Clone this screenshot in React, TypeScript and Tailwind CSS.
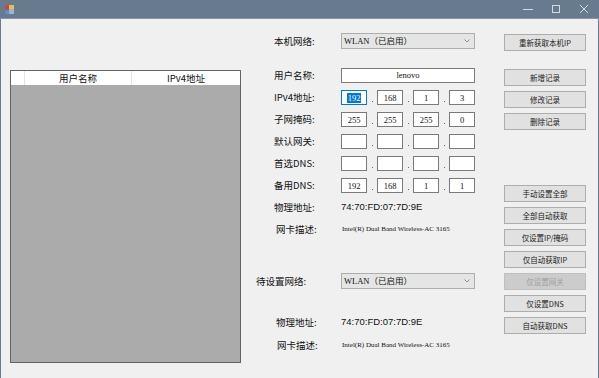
import React from "react";

const cjk = "font-['Microsoft_YaHei','Noto_Sans_CJK_SC',sans-serif]";
const serif = "font-['Liberation_Serif','Noto_Sans_CJK_SC',serif]";

function Label({ text, pl = "pl-[18px]" }: { text: string; pl?: string }) {
  return (
    <div className={`w-[85px] shrink-0 ${pl} text-[9.5px] text-[#111] ${cjk}`}>{text}</div>
  );
}

function Combo({ value }: { value: string }) {
  return (
    <div className="w-[134px] h-[16px] bg-[#e5e5e5] border border-[#adadad] flex items-center justify-between pl-[2px] pr-[4px]">
      <span className={`text-[8.5px] text-[#111] ${serif}`}>{value}</span>
      <svg width="6" height="4" viewBox="0 0 6 4">
        <path d="M0.5 0.5 L3 3 L5.5 0.5" stroke="#777" fill="none" strokeWidth="0.8" />
      </svg>
    </div>
  );
}

function IpBox({ value, selected }: { value?: string; selected?: boolean }) {
  return (
    <div
      className={`w-[26px] h-[15px] bg-white border flex items-center justify-center ${
        selected ? "border-[#0078d7]" : "border-[#7a7a7a]"
      }`}
    >
      {value && (
        <span
          className={`text-[8.5px] leading-[10px] px-[1px] ${serif} ${
            selected ? "bg-[#0078d7] text-white" : "text-[#111]"
          }`}
        >
          {value}
        </span>
      )}
    </div>
  );
}

function Dot() {
  return (
    <div className="w-[10px] h-[15px] flex items-end justify-center pb-[3px]">
      <div className="w-[1px] h-[1px] bg-[#666]" />
    </div>
  );
}

function IpRow({ label, parts, selFirst }: { label: string; parts: string[]; selFirst?: boolean }) {
  return (
    <div className="flex items-center h-[15px] mt-[7px]">
      <Label text={label} />
      <div className="flex">
        <IpBox value={parts[0]} selected={selFirst} />
        <Dot />
        <IpBox value={parts[1]} />
        <Dot />
        <IpBox value={parts[2]} />
        <Dot />
        <IpBox value={parts[3]} />
      </div>
    </div>
  );
}

function Btn({ text, disabled, className = "" }: { text: string; disabled?: boolean; className?: string }) {
  return (
    <div
      className={`w-[82px] h-[17px] border flex items-center justify-center text-[7.5px] ${cjk} ${className} ${
        disabled
          ? "bg-[#cccccc] border-[#bfbfbf] text-[#a0a0a0]"
          : "bg-[#e1e1e1] border-[#adadad] text-[#222]"
      }`}
    >
      {text}
    </div>
  );
}

export default function App() {
  const desc = "Intel(R) Dual Band Wireless-AC 3165";
  return (
    <div className="w-[599px] h-[378px] overflow-hidden bg-[#f0f0f0] flex flex-col">
      {/* title bar */}
      <div className="h-[19px] bg-[#687a8e] flex items-center justify-between pl-[5px] pr-[10px] border-b border-[#8595a6]">
        <svg width="9" height="9" viewBox="0 0 9 9">
          <rect x="0" y="0" width="4" height="5" fill="#c94a3a" />
          <rect x="4" y="0" width="5" height="4" fill="#e8c04a" />
          <rect x="0" y="5" width="4" height="4" fill="#5a8fd0" />
          <rect x="4" y="4" width="5" height="5" fill="#9ab5d8" />
        </svg>
        <div className="flex items-center gap-[18px]">
          <svg width="10" height="10" viewBox="0 0 10 10">
            <path d="M0 5.5 H10" stroke="#d4dae0" strokeWidth="1" />
          </svg>
          <svg width="10" height="10" viewBox="0 0 10 10">
            <rect x="1.5" y="1.5" width="7" height="7" stroke="#d4dae0" fill="none" strokeWidth="1" />
          </svg>
          <svg width="10" height="10" viewBox="0 0 10 10">
            <path d="M1 1 L9 9 M9 1 L1 9" stroke="#d4dae0" strokeWidth="1" />
          </svg>
        </div>
      </div>

      {/* client */}
      <div className="flex-1 flex border-l border-r border-[#6b7c90]">
        {/* list */}
        <div className="ml-[9px] mt-[51px] w-[231px] h-[293px] border border-[#646464] bg-[#ababab] flex flex-col">
          <div className={`h-[14px] bg-white flex text-[9.5px] text-[#111] ${cjk}`}>
            <div className="w-[14px] border-r border-[#e3e3e3]" />
            <div className="w-[107px] border-r border-[#e3e3e3] flex items-center justify-center">用户名称</div>
            <div className="flex-1 flex items-center justify-center">IPv4地址</div>
          </div>
        </div>

        {/* form */}
        <div className="ml-[15px] w-[219px] flex flex-col pt-[14px]">
          <div className="flex items-center h-[16px]">
            <Label text="本机网络:" />
            <Combo value="WLAN（已启用）" />
          </div>
          <div className="flex items-center h-[15px] mt-[19px]">
            <Label text="用户名称:" />
            <div className="w-[134px] h-[15px] bg-white border border-[#7a7a7a] flex items-center justify-center">
              <span className={`text-[8.5px] text-[#111] ${serif}`}>lenovo</span>
            </div>
          </div>
          <IpRow label="IPv4地址:" parts={["192", "168", "1", "3"]} selFirst />
          <IpRow label="子网掩码:" parts={["255", "255", "255", "0"]} />
          <IpRow label="默认网关:" parts={["", "", "", ""]} />
          <IpRow label="首选DNS:" parts={["", "", "", ""]} />
          <IpRow label="备用DNS:" parts={["192", "168", "1", "1"]} />
          <div className="flex items-center h-[15px] mt-[7px]">
            <Label text="物理地址:" />
            <span className="text-[9.5px] text-[#111] font-['Liberation_Sans',sans-serif]">74:70:FD:07:7D:9E</span>
          </div>
          <div className="flex items-center h-[15px] mt-[7px]">
            <Label text="网卡描述:" pl="pl-[20px]" />
            <span className={`text-[7px] text-[#111] pl-[1px] ${serif}`}>{desc}</span>
          </div>
          <div className="flex items-center h-[16px] mt-[36px]">
            <Label text="待设置网络:" pl="pl-0" />
            <Combo value="WLAN（已启用）" />
          </div>
          <div className="flex items-center h-[15px] mt-[26px]">
            <Label text="物理地址:" pl="pl-[20px]" />
            <span className="text-[9.5px] text-[#111] font-['Liberation_Sans',sans-serif]">74:70:FD:07:7D:9E</span>
          </div>
          <div className="flex items-center h-[15px] mt-[8px]">
            <Label text="网卡描述:" pl="pl-[21px]" />
            <span className={`text-[7px] text-[#111] pl-[1px] ${serif}`}>{desc}</span>
          </div>
        </div>

        {/* buttons */}
        <div className="ml-[29px] flex flex-col pt-[15px] gap-[5px]">
          <Btn text="重新获取本机IP" />
          <Btn text="新增记录" className="mt-[13px]" />
          <Btn text="修改记录" />
          <Btn text="删除记录" />
          <Btn text="手动设置全部" className="mt-[50px]" />
          <Btn text="全部自动获取" />
          <Btn text="仅设置IP/掩码" />
          <Btn text="仅自动获取IP" />
          <Btn text="仅设置网关" disabled />
          <Btn text="仅设置DNS" />
          <Btn text="自动获取DNS" />
        </div>
      </div>
    </div>
  );
}
